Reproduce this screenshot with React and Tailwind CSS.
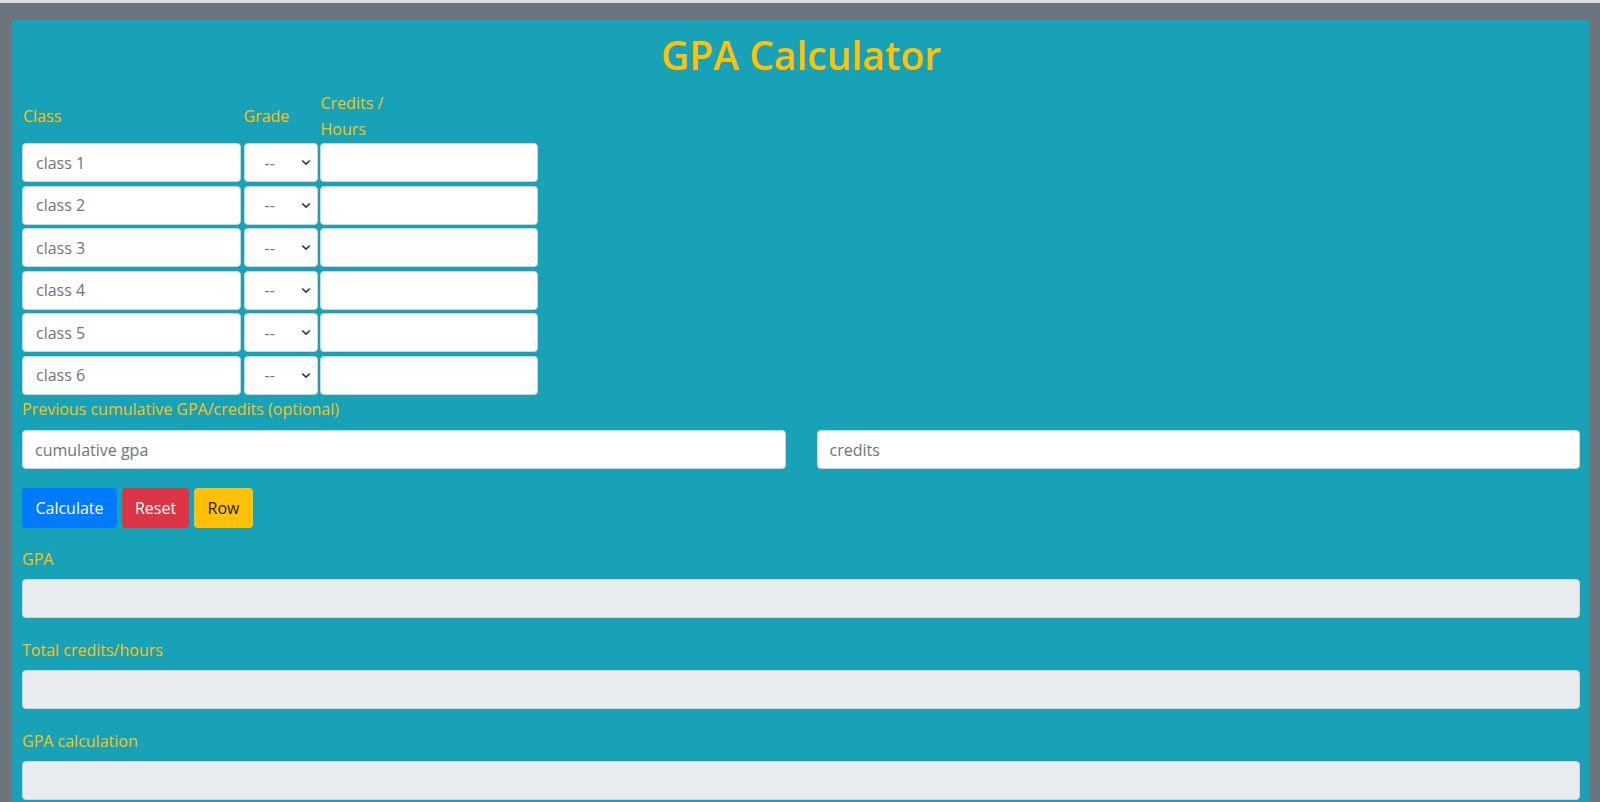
import React, { useState } from "react";

const font = { fontFamily: '"Open Sans", "Noto Sans", sans-serif' };

const rows = [1, 2, 3, 4, 5, 6];

const GradeSelect = () => (
  <div className="relative w-[74px] h-[39px]">
    <select
      defaultValue=""
      className="w-full h-full appearance-none bg-white border border-[#ced4da] rounded-[4px] pl-[20px] text-[16px] text-[#6c757d] outline-none"
    >
      <option value="">--</option>
      <option value="4">A</option>
      <option value="3">B</option>
      <option value="2">C</option>
      <option value="1">D</option>
      <option value="0">F</option>
    </select>
    <svg
      className="absolute right-[7px] top-[16px] pointer-events-none"
      width="10"
      height="7"
      viewBox="0 0 10 7"
      fill="none"
    >
      <path d="M1.2 1.5l3.8 3.6 3.8-3.6" stroke="#343a40" strokeWidth="1.7" />
    </svg>
  </div>
);

const ResultBox = ({ label, first }) => (
  <div className={first ? "mt-[18.5px]" : "mt-[20px]"}>
    <div className="h-[24px] leading-[24px] text-[16px] text-[#ffc107] mb-[8px]">{label}</div>
    <div className="h-[39px] bg-[#e9ecef] border border-[#ced4da] rounded-[4px]"></div>
  </div>
);

export default function App() {
  const [count] = useState(rows);

  return (
    <div
      className="min-h-screen flex flex-col bg-[#6c757d] border-t-[3px] border-[#dadcde]"
      style={font}
    >
      <div className="flex-1 flex flex-col pt-[17px] pl-[12px] pr-[11px]">
        <div className="flex-1 bg-[#17a2b8] pl-[10px] pr-[9px] pt-[11px]">
          <h1 className="text-center text-[39px] leading-[48px] font-semibold text-[#ffc107] mb-[12px]">
            GPA Calculator
          </h1>

          {/* course table */}
          <div className="flex items-center h-[52px] text-[16px] text-[#ffc107] leading-[25.6px]">
            <div className="w-[219px] pl-[1px]">Class</div>
            <div className="w-[76px] ml-[2.5px]">Grade</div>
            <div className="pl-[1px]">
              Credits /<br />
              Hours
            </div>
          </div>
          <div className="flex flex-col gap-y-[3.5px]">
            {count.map((n) => (
              <div key={n} className="flex gap-x-[2.5px]">
                <input
                  type="text"
                  placeholder={`class ${n}`}
                  className="w-[219px] h-[39px] bg-white border border-[#ced4da] rounded-[4px] px-[13px] text-[16px] text-[#495057] placeholder:text-[#6c757d] outline-none"
                />
                <GradeSelect />
                <input
                  type="text"
                  className="w-[218px] h-[39px] bg-white border border-[#ced4da] rounded-[4px] px-[12px] text-[16px] outline-none"
                />
              </div>
            ))}
          </div>

          <div className="mt-[2.5px] h-[24px] leading-[24px] text-[16px] text-[#ffc107]">
            Previous cumulative GPA/credits (optional)
          </div>
          <div className="mt-[9px] grid grid-cols-2 gap-x-[31px]">
            <input
              type="text"
              placeholder="cumulative gpa"
              className="h-[39px] bg-white border border-[#ced4da] rounded-[4px] px-[12px] text-[16px] placeholder:text-[#6c757d] outline-none"
            />
            <input
              type="text"
              placeholder="credits"
              className="h-[39px] bg-white border border-[#ced4da] rounded-[4px] px-[12px] text-[16px] placeholder:text-[#6c757d] outline-none"
            />
          </div>

          <div className="mt-[19px] flex gap-x-[5px]">
            <button className="h-[40px] w-[95px] rounded-[4px] bg-[#007bff] text-white text-[16px]">
              Calculate
            </button>
            <button className="h-[40px] w-[67px] rounded-[4px] bg-[#dc3545] text-white text-[16px]">
              Reset
            </button>
            <button className="h-[40px] w-[59px] rounded-[4px] bg-[#ffc107] text-[#212529] text-[16px]">
              Row
            </button>
          </div>

          <ResultBox label="GPA" first />
          <ResultBox label="Total credits/hours" />
          <ResultBox label="GPA calculation" />
        </div>
      </div>
    </div>
  );
}
